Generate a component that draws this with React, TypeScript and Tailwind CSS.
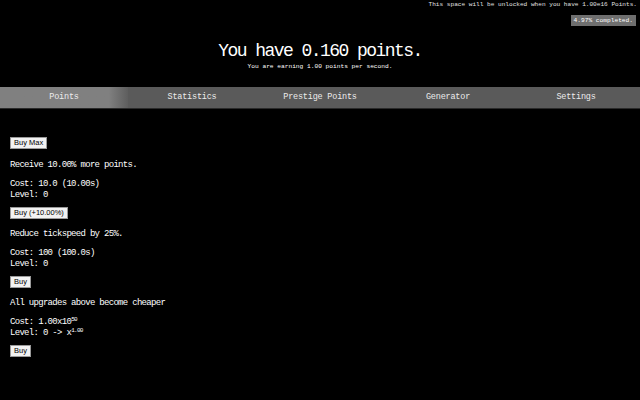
// Idle game screen: points header, tab bar, upgrade list.
const TABS = ["Points", "Statistics", "Prestige Points", "Generator", "Settings"];

const mono = "font-['Liberation_Mono','DejaVu_Sans_Mono',monospace]";

function Btn({ label }: { label: string }) {
  return (
    <button className="h-[12px] border border-[#9a9a9a] bg-[#f2f2f2] px-[3px] font-['Liberation_Sans',Arial,sans-serif] text-[7.5px] leading-[10px] tracking-normal text-black">
      {label}
    </button>
  );
}

export default function App() {
  return (
    <div className={`h-[400px] w-[640px] overflow-hidden bg-black text-white ${mono}`}>
      <div className="pr-[3px] pt-[1px] text-right text-[6.1px] leading-[8px] text-[#e0e0e0]">
        This space will be unlocked when you have 1.00e16 Points.
      </div>
      <div className="mt-[6px] flex justify-end pr-[4px]">
        <span className="bg-[#6f6f6f] px-[3px] text-[6.2px] leading-[11px] text-white">4.97% completed.</span>
      </div>

      <div className="mt-[15px] text-center">
        <h1 className="text-[18px] leading-[20px] tracking-[-1.55px]">You have 0.160 points.</h1>
        <p className="mt-[2px] text-[6.2px] leading-[8px] text-white">You are earning 1.00 points per second.</p>
      </div>

      <div className="mt-[16px] grid h-[21px] grid-cols-5 bg-[#5a5a5a] shadow-[0_1px_0_#2a2a2a]">
        {TABS.map((t, i) => (
          <div
            key={t}
            className={`flex items-center justify-center text-[8.5px] tracking-[-0.2px] text-[#ececec] ${
              i === 0 ? "bg-gradient-to-r from-[#808080] from-[85%] to-[#5e5e5e]" : ""
            }`}
          >
            {t}
          </div>
        ))}
      </div>

      <div className="px-[10px] pt-[29px] text-[9px] leading-[11px] tracking-[-0.7px]">
        <Btn label="Buy Max" />

        <p className="mt-[11px]">Receive 10.00% more points.</p>
        <p className="mt-[8px]">Cost: 10.0 (10.00s)</p>
        <p>Level: 0</p>
        <div className="mt-[6px]">
          <Btn label="Buy (+10.00%)" />
        </div>

        <p className="mt-[10px]">Reduce tickspeed by 25%.</p>
        <p className="mt-[8px]">Cost: 100 (100.0s)</p>
        <p>Level: 0</p>
        <div className="mt-[6px]">
          <Btn label="Buy" />
        </div>

        <p className="mt-[10px]">All upgrades above become cheaper</p>
        <p className="mt-[8px]">
          Cost: 1.00x10<sup className="text-[6px]">50</sup>
        </p>
        <p>
          Level: 0 -&gt; x<sup className="text-[6px]">1.00</sup>
        </p>
        <div className="mt-[6px]">
          <Btn label="Buy" />
        </div>
      </div>
    </div>
  );
}
